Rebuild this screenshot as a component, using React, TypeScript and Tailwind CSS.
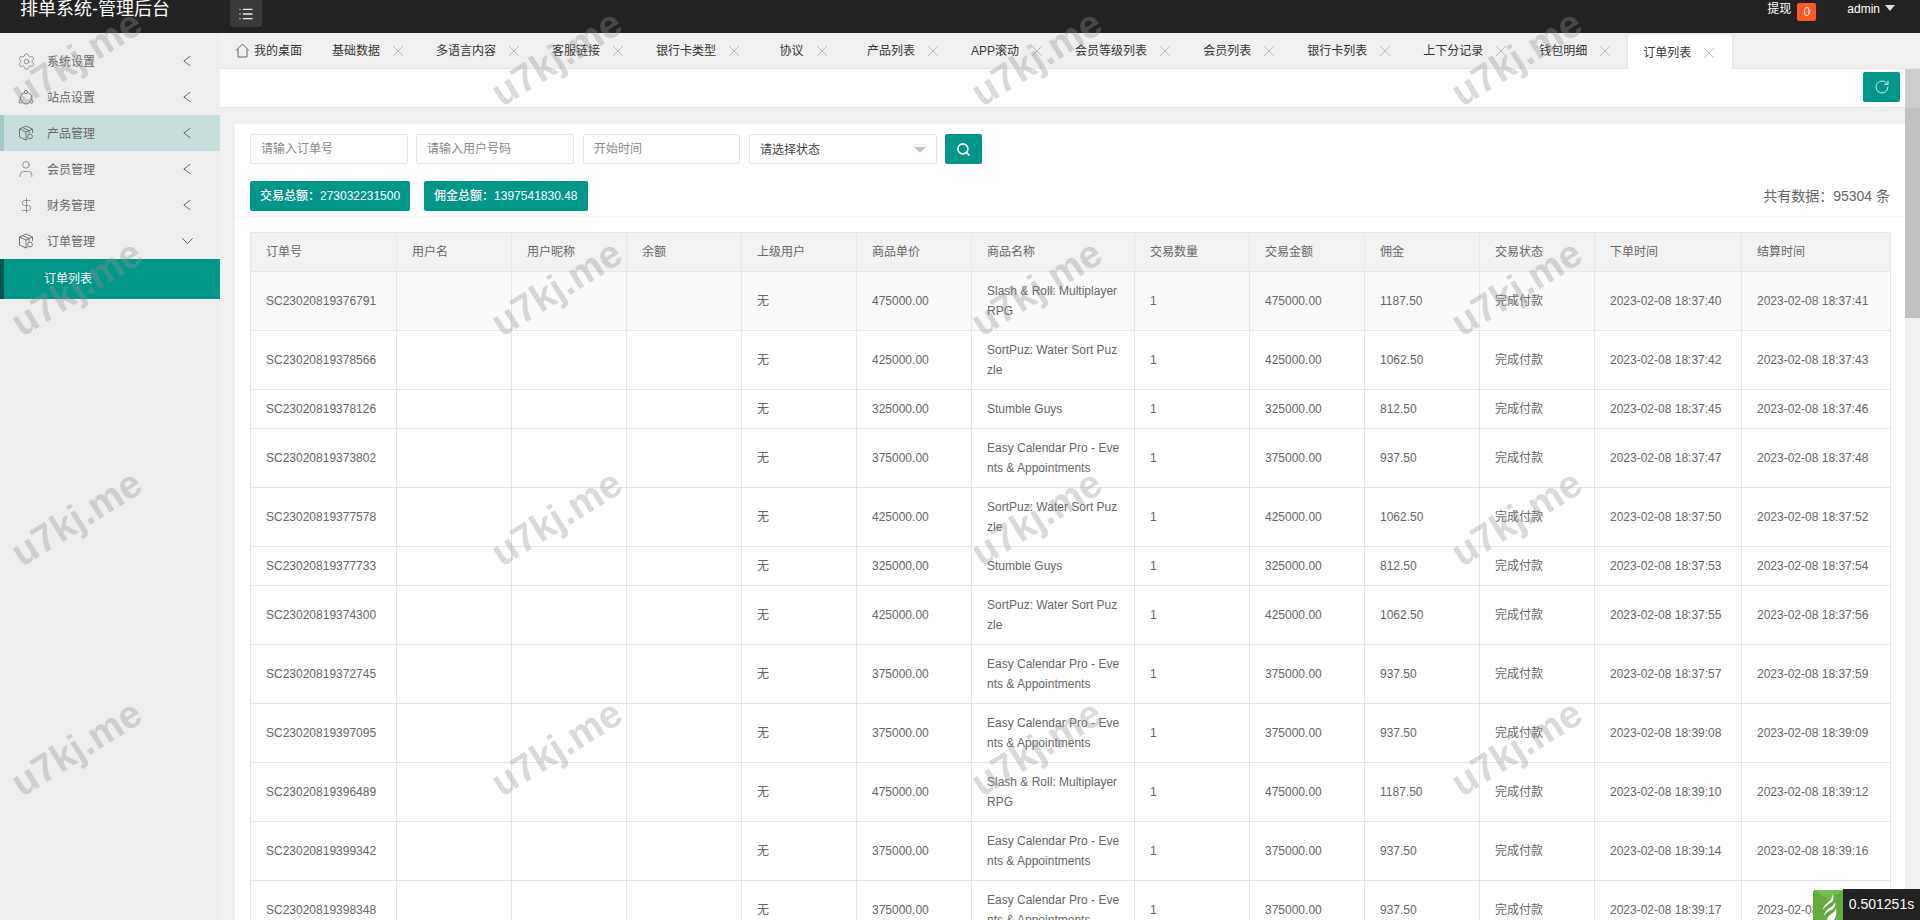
import { DollarSign, List, RotateCw, Search, Settings, User } from "lucide-react";

const tabs = [
  "基础数据",
  "多语言内容",
  "客服链接",
  "银行卡类型",
  "协议",
  "产品列表",
  "APP滚动",
  "会员等级列表",
  "会员列表",
  "银行卡列表",
  "上下分记录",
  "钱包明细",
];

const columns = [
  { title: "订单号", width: "w-[146px]" },
  { title: "用户名", width: "w-[115px]" },
  { title: "用户昵称", width: "w-[115px]" },
  { title: "余额", width: "w-[115px]" },
  { title: "上级用户", width: "w-[115px]" },
  { title: "商品单价", width: "w-[115px]" },
  { title: "商品名称", width: "w-[163px]" },
  { title: "交易数量", width: "w-[115px]" },
  { title: "交易金额", width: "w-[115px]" },
  { title: "佣金", width: "w-[115px]" },
  { title: "交易状态", width: "w-[115px]" },
  { title: "下单时间", width: "w-[147px]" },
  { title: "结算时间", width: "w-[149px]" },
];

const slash = { price: "475000.00", name: "Slash & Roll: Multiplayer RPG", fee: "1187.50" };
const sort = { price: "425000.00", name: "SortPuz: Water Sort Puzzle", fee: "1062.50" };
const stumble = { price: "325000.00", name: "Stumble Guys", fee: "812.50" };
const easy = { price: "375000.00", name: "Easy Calendar Pro - Events & Appointments", fee: "937.50" };

const orders = [
  { no: "SC23020819376791", product: slash, start: "18:37:40", end: "18:37:41" },
  { no: "SC23020819378566", product: sort, start: "18:37:42", end: "18:37:43" },
  { no: "SC23020819378126", product: stumble, start: "18:37:45", end: "18:37:46" },
  { no: "SC23020819373802", product: easy, start: "18:37:47", end: "18:37:48" },
  { no: "SC23020819377578", product: sort, start: "18:37:50", end: "18:37:52" },
  { no: "SC23020819377733", product: stumble, start: "18:37:53", end: "18:37:54" },
  { no: "SC23020819374300", product: sort, start: "18:37:55", end: "18:37:56" },
  { no: "SC23020819372745", product: easy, start: "18:37:57", end: "18:37:59" },
  { no: "SC23020819397095", product: easy, start: "18:39:08", end: "18:39:09" },
  { no: "SC23020819396489", product: slash, start: "18:39:10", end: "18:39:12" },
  { no: "SC23020819399342", product: easy, start: "18:39:14", end: "18:39:16" },
  { no: "SC23020819398348", product: easy, start: "18:39:17", end: "18:39:18" },
];

function CloseIcon() {
  return (
    <svg viewBox="0 0 16 16" className="w-4 h-4 ml-[10px] shrink-0 text-[#bbb]" fill="none" stroke="currentColor">
      <path d="M3 3l10 10M13 3L3 13" />
    </svg>
  );
}

function HomeIcon() {
  return (
    <svg viewBox="0 0 15 15" className="w-[15px] h-[15px] mr-1 shrink-0 text-[#666]" fill="none" stroke="currentColor">
      <path d="M1 7.5L7.5 1 14 7.5M3 6v8h9V6" />
    </svg>
  );
}

function SiteIcon() {
  return (
    <svg viewBox="0 0 16 16" className="w-4 h-4 text-[#666]" fill="none" stroke="currentColor" strokeWidth="0.9">
      <circle cx="8" cy="3" r="1.6" />
      <circle cx="2.5" cy="12.5" r="1.6" />
      <circle cx="13.5" cy="12.5" r="1.6" />
      <path d="M6.2 3.6A6 6 0 0 0 2.4 10.8M9.8 3.6a6 6 0 0 1 3.8 7.2M4.2 13.4a6 6 0 0 0 7.6 0" />
    </svg>
  );
}

function BoxIcon() {
  return (
    <svg viewBox="0 0 16 16" className="w-4 h-4 text-[#666]" fill="none" stroke="currentColor" strokeWidth="0.9">
      <path d="M8 1L1.5 4v8L8 15l1.5-.7M8 1l6.5 3v4M1.5 4L8 7l6.5-3M8 7v8" />
      <path d="M4.5 2.6l6.5 3v3" />
      <circle cx="12" cy="11.5" r="2.4" />
    </svg>
  );
}

function ArrowLeft() {
  return (
    <svg viewBox="0 0 8 10" className="w-2 h-[10px] mr-[29px] text-[#666]" fill="none" stroke="currentColor">
      <path d="M7.5 0L.8 5l6.7 5" />
    </svg>
  );
}

function ArrowDown() {
  return (
    <svg viewBox="0 0 11 6" className="w-[11px] h-[6px] mr-[27px] text-[#666]" fill="none" stroke="currentColor">
      <path d="M.3.3l5.2 5.2L10.7.3" />
    </svg>
  );
}

function MenuRow({ label, icon, active }: { label: string; icon: React.ReactNode; active?: boolean }) {
  return (
    <div className={`h-9 flex items-center text-[12px] text-[#666] border-l-4 ${active ? "bg-[#c8dedd] border-[#a3c7c4]" : "border-transparent"}`}>
      <span className="w-4 ml-[14px] flex justify-center">{icon}</span>
      <span className="ml-[13px] flex-1 pt-px">{label}</span>
      {label === "订单管理" ? <ArrowDown /> : <ArrowLeft />}
    </div>
  );
}

function Sidebar() {
  return (
    <aside className="w-[220px] shrink-0 bg-[#eeeeee] pt-[10px]">
      <MenuRow label="系统设置" icon={<Settings size={19} strokeWidth={0.8} className="shrink-0 text-[#666]" />} />
      <MenuRow label="站点设置" icon={<SiteIcon />} />
      <MenuRow label="产品管理" icon={<BoxIcon />} active />
      <MenuRow label="会员管理" icon={<User size={20} strokeWidth={0.8} className="shrink-0 text-[#666]" />} />
      <MenuRow label="财务管理" icon={<DollarSign size={17} strokeWidth={0.9} className="shrink-0 text-[#666]" />} />
      <MenuRow label="订单管理" icon={<BoxIcon />} />
      <div className="h-10 flex items-center bg-[#009688] border-l-4 border-[#00574f] pl-10 text-[12px] text-white">订单列表</div>
    </aside>
  );
}

function TabBar() {
  return (
    <div className="h-9 shrink-0 flex bg-[#f0f0f0] border-b border-[#e6e6e6] text-[12px] text-[#333]">
      <div className="flex items-center px-[15px]">
        <HomeIcon />
        我的桌面
      </div>
      {tabs.map((t) => (
        <div key={t} className="flex items-center justify-center min-w-[95px] px-[15px] whitespace-nowrap">
          {t}
          <CloseIcon />
        </div>
      ))}
      <div className="flex items-center justify-center mt-[2px] h-[35px] px-[15px] whitespace-nowrap bg-white border-x border-[#e6e6e6] -ml-px">
        订单列表
        <CloseIcon />
      </div>
    </div>
  );
}

function Filters() {
  return (
    <div className="flex pt-[10px] gap-2 text-[12px]">
      <div className="w-[158px] h-[30px] flex items-center pl-[10px] bg-white border border-[#e6e6e6] rounded-[2px] text-[#888]">请输入订单号</div>
      <div className="w-[158px] h-[30px] flex items-center pl-[10px] bg-white border border-[#e6e6e6] rounded-[2px] text-[#888]">请输入用户号码</div>
      <div className="w-[157px] h-[30px] flex items-center pl-[10px] bg-white border border-[#e6e6e6] rounded-[2px] text-[#888] ml-px">开始时间</div>
      <div className="w-[188px] h-[30px] flex items-center justify-between pl-[10px] pr-[10px] pt-px bg-white border border-[#e6e6e6] rounded-[2px] text-[#444] ml-px">
        请选择状态
        <span className="w-0 h-0 border-x-[6px] border-x-transparent border-t-[6px] border-t-[#c2c2c2]" />
      </div>
      <button className="w-[37px] h-[30px] flex items-center justify-center bg-[#009688] rounded-[2px] text-white">
        <Search size={15} strokeWidth={2.5} />
      </button>
    </div>
  );
}

function Totals() {
  return (
    <div className="flex items-center gap-[14px] mt-[17px] text-[12px] text-white font-medium">
      <div className="h-[30px] flex items-center px-[10px] bg-[#009688] rounded-[2px]">交易总额：273032231500</div>
      <div className="h-[30px] flex items-center px-[10px] bg-[#009688] rounded-[2px]">佣金总额：1397541830.48</div>
      <div className="ml-auto text-[14px] font-normal text-[#666]">共有数据：95304 条</div>
    </div>
  );
}

function OrderTable() {
  return (
    <table className="w-full table-fixed border-collapse text-[12px] leading-5 text-[#666]">
      <thead>
        <tr className="bg-[#f2f2f2]">
          {columns.map((c) => (
            <th key={c.title} className={`${c.width} h-[39px] px-[15px] text-left font-normal border border-[#e6e6e6]`}>
              {c.title}
            </th>
          ))}
        </tr>
      </thead>
      <tbody>
        {orders.map((o, i) => (
          <tr key={o.no} className={i === 0 ? "bg-[#fafafa]" : "bg-white"}>
            <td className="px-[15px] py-[9px] border border-[#e6e6e6]">{o.no}</td>
            <td className="px-[15px] py-[9px] border border-[#e6e6e6]"></td>
            <td className="px-[15px] py-[9px] border border-[#e6e6e6]"></td>
            <td className="px-[15px] py-[9px] border border-[#e6e6e6]"></td>
            <td className="px-[15px] py-[9px] border border-[#e6e6e6]">无</td>
            <td className="px-[15px] py-[9px] border border-[#e6e6e6]">{o.product.price}</td>
            <td className="pl-[15px] pr-[13px] py-[9px] border border-[#e6e6e6] break-all">{o.product.name}</td>
            <td className="px-[15px] py-[9px] border border-[#e6e6e6]">1</td>
            <td className="px-[15px] py-[9px] border border-[#e6e6e6]">{o.product.price}</td>
            <td className="px-[15px] py-[9px] border border-[#e6e6e6]">{o.product.fee}</td>
            <td className="px-[15px] py-[9px] border border-[#e6e6e6]">完成付款</td>
            <td className="px-[15px] py-[9px] border border-[#e6e6e6]">2023-02-08 {o.start}</td>
            <td className="px-[15px] py-[9px] border border-[#e6e6e6]">2023-02-08 {o.end}</td>
          </tr>
        ))}
      </tbody>
    </table>
  );
}

function Watermarks() {
  const marks = Array.from({ length: 16 }, (_, i) => i);
  return (
    <div className="absolute inset-0 z-10 pointer-events-none grid grid-cols-[repeat(4,480px)] auto-rows-[230px]">
      {marks.map((m) => (
        <div key={m} className="w-[153px] h-[117px] flex items-center justify-center">
          <span className="rotate-[-32deg] whitespace-nowrap text-[39px] font-bold text-[rgba(146,146,146,0.36)]">u7kj.me</span>
        </div>
      ))}
    </div>
  );
}

function TraceBadge() {
  return (
    <div className="absolute right-0 bottom-0 z-20 flex items-end">
      <div className="w-[30px] h-[30px] rounded-tl-[3px] bg-[#62ab3f] overflow-hidden">
        <svg viewBox="0 0 30 30" className="w-[30px] h-[30px]" fill="#fff">
          <path d="M0 0h30L16 10z" fill="#74bb50" />
          <path d="M19 4c1 5-3 7-6 10-2 2-3 4-3 6 2-4 6-6 9-8 2-2 2-5 0-8z" />
          <path d="M22 11c0 4-4 6-7 8-2 2-4 4-4 7 2-4 6-5 9-7 2-2 3-5 2-8z" />
          <path d="M23 18c-1 4-4 5-6 7-2 1-3 3-3 5h7c2-3 3-7 2-12z" />
        </svg>
      </div>
      <div className="w-[77px] h-[31px] flex items-center justify-center bg-[#222] text-[14px] text-white">0.501251s</div>
    </div>
  );
}

export default function App() {
  return (
    <div className="relative w-[1920px] h-[920px] overflow-hidden flex flex-col bg-[#eeeeee] font-['Liberation_Sans','Noto_Sans_CJK_SC',sans-serif]">
      <header className="h-[33px] shrink-0 flex items-start bg-[#222222] text-white">
        <div className="ml-5 w-[210px] text-[18px] leading-[18px] whitespace-nowrap">排单系统-管理后台</div>
        <div className="w-8 h-[27px] flex items-center justify-center bg-[#3a3a3a] rounded-b-[3px]">
          <List size={16} className="text-[#eee]" />
        </div>
        <div className="ml-auto flex items-start text-[12px] leading-[19px]">
          <span>提现</span>
          <span className="mt-[3px] ml-[6px] w-[19px] h-[18px] flex items-center justify-center bg-[#ff5722] rounded-[2px]">0</span>
          <span className="ml-[31px]">admin</span>
          <span className="mt-[5px] ml-[5px] mr-[25px] w-0 h-0 border-x-[5.5px] border-x-transparent border-t-[6px] border-t-[#ddd]" />
        </div>
      </header>
      <div className="flex-1 flex min-h-0">
        <Sidebar />
        <main className="flex-1 min-w-0 flex flex-col">
          <TabBar />
          <div className="flex-1 min-h-0 flex">
            <div className="flex-1 min-w-0 bg-[#f0f0f0]">
              <div className="h-[39px] flex justify-end items-start pt-[3px] pr-[5px] bg-white border-b border-[#e6e6e6]">
                <button className="w-[37px] h-[30px] flex items-center justify-center bg-[#009688] rounded-[2px] text-[#d9f3f0]">
                  <RotateCw size={16} strokeWidth={1.5} />
                </button>
              </div>
              <div className="mt-4 ml-[15px] px-[15px] bg-white h-full">
                <Filters />
                <Totals />
                <div className="mt-[5px] mb-[15px] h-px bg-[#f6f6f6] -mx-[15px]" />
                <OrderTable />
              </div>
            </div>
            <div className="w-[15px] shrink-0 bg-[#f1f1f1]">
              <div className="h-[39px] bg-[#cdcdcd]" />
              <div className="h-[210px] bg-[#c1c1c1]" />
            </div>
          </div>
        </main>
      </div>
      <Watermarks />
      <TraceBadge />
    </div>
  );
}
